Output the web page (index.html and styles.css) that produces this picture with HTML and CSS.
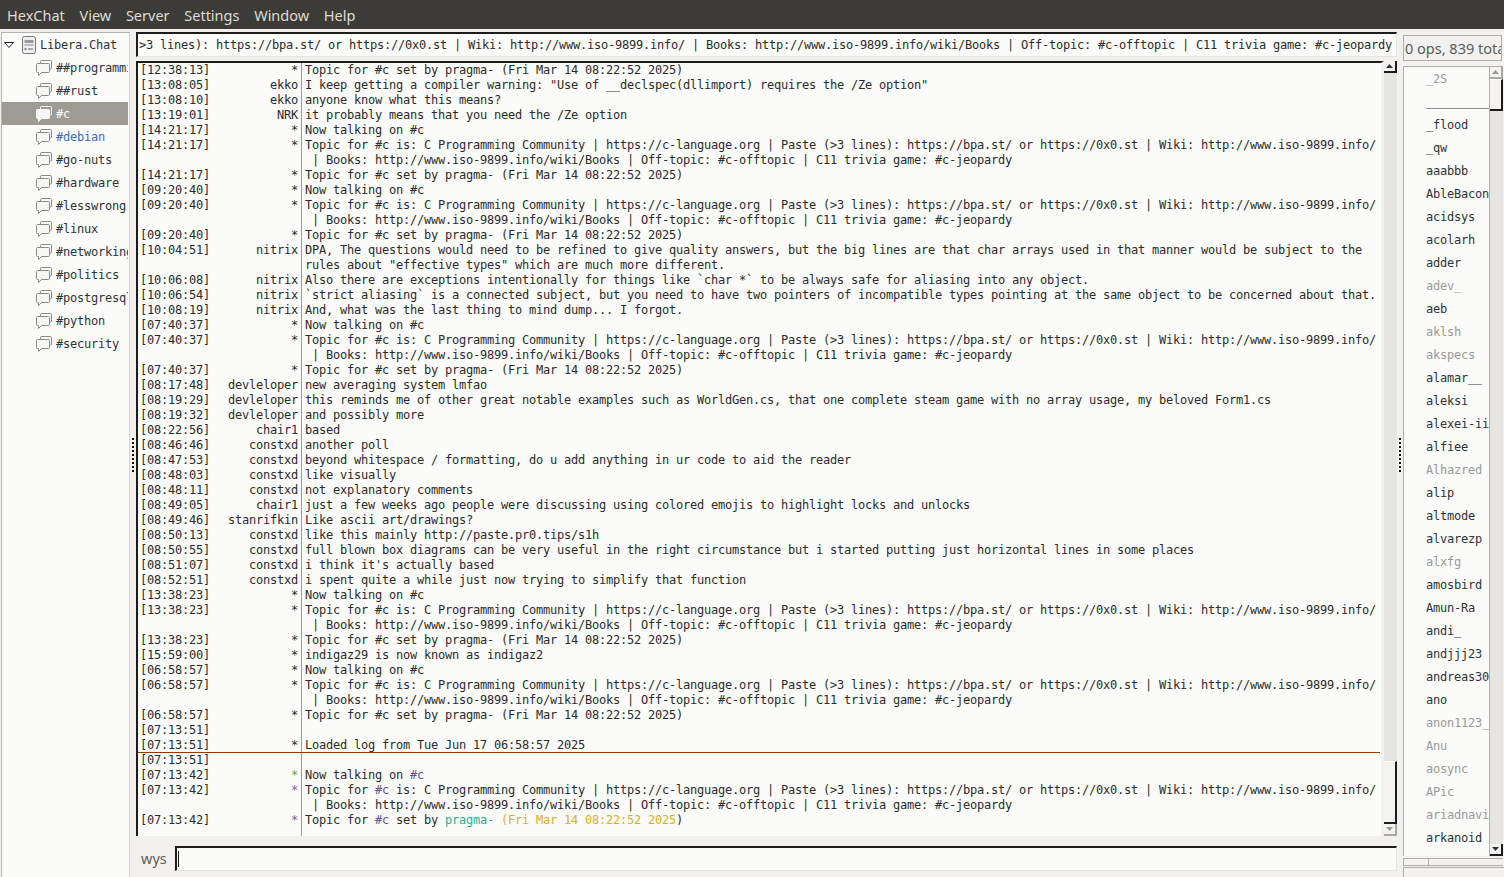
FILE: index.html
```html
<!DOCTYPE html>
<html lang="en">
<head>
<meta charset="utf-8">
<title>HexChat</title>
<link rel="stylesheet" href="styles.css">
</head>
<body>
<svg class="defs" width="0" height="0" aria-hidden="true">
  <symbol id="chan" viewBox="0 0 16 16">
    <path d="M4.500 3.500V1.500a1 1 0 0 1 1-1h9a1 1 0 0 1 1 1v6.500a1 1 0 0 1-1 1h-1" fill="none" stroke="currentColor"/>
    <path d="M1.500 3.500h11a1 1 0 0 1 1 1v7a1 1 0 0 1-1 1H5.500l-3 3v-3h-1a1 1 0 0 1-1-1v-7a1 1 0 0 1 1-1z" fill="#f6f6f4" stroke="currentColor"/>
  </symbol>
</svg>
<header class="menubar">
  <span>HexChat</span><span>View</span><span>Server</span><span>Settings</span><span>Window</span><span>Help</span>
</header>
<main class="workspace">
  <nav class="tree">
    <div class="tree-row server">
      <svg class="arrow" viewBox="0 0 10 6"><path d="M.5.500h9L5 5.500z" fill="#fff" stroke="#222"/></svg>
      <svg class="srv-icon" viewBox="0 0 14 18"><rect x=".5" y=".5" width="13" height="17" rx="2" fill="#eee" stroke="#777"/><rect x="2.500" y="4" width="9" height="3" fill="#999"/><rect x="2.500" y="8" width="9" height="2" fill="#bbb"/><rect x="2.500" y="12" width="2" height="2" fill="#888"/><rect x="6" y="12" width="5" height="2" fill="#aaa"/></svg>
      <span>Libera.Chat</span>
    </div>
    <div class="tree-row"><svg class="chan"><use href="#chan"/></svg><span>##programming</span></div>
    <div class="tree-row"><svg class="chan"><use href="#chan"/></svg><span>##rust</span></div>
    <div class="tree-row active"><svg class="chan"><use href="#chan"/></svg><span>#c</span></div>
    <div class="tree-row blue"><svg class="chan"><use href="#chan"/></svg><span>#debian</span></div>
    <div class="tree-row"><svg class="chan"><use href="#chan"/></svg><span>#go-nuts</span></div>
    <div class="tree-row"><svg class="chan"><use href="#chan"/></svg><span>#hardware</span></div>
    <div class="tree-row"><svg class="chan"><use href="#chan"/></svg><span>#lesswrong</span></div>
    <div class="tree-row"><svg class="chan"><use href="#chan"/></svg><span>#linux</span></div>
    <div class="tree-row"><svg class="chan"><use href="#chan"/></svg><span>#networking</span></div>
    <div class="tree-row"><svg class="chan"><use href="#chan"/></svg><span>#politics</span></div>
    <div class="tree-row"><svg class="chan"><use href="#chan"/></svg><span>#postgresql</span></div>
    <div class="tree-row"><svg class="chan"><use href="#chan"/></svg><span>#python</span></div>
    <div class="tree-row"><svg class="chan"><use href="#chan"/></svg><span>#security</span></div>
  </nav>
  <div class="grip"><i></i></div>
  <section class="center">
    <div class="topic"><span>&gt;3 lines): https://bpa.st/ or https://0x0.st | Wiki: http://www.iso-9899.info/ | Books: http://www.iso-9899.info/wiki/Books | Off-topic: #c-offtopic | C11 trivia game: #c-jeopardy</span></div>
    <div class="chat-wrap">
      <div class="chat">
        <div class="line"><time>[12:38:13]</time><b>*</b><p>Topic for #c set by pragma- (Fri Mar 14 08:22:52 2025)</p></div>
        <div class="line"><time>[13:08:05]</time><b>ekko</b><p>I keep getting a compiler warning: "Use of __declspec(dllimport) requires the /Ze option"</p></div>
        <div class="line"><time>[13:08:10]</time><b>ekko</b><p>anyone know what this means?</p></div>
        <div class="line"><time>[13:19:01]</time><b>NRK</b><p>it probably means that you need the /Ze option</p></div>
        <div class="line"><time>[14:21:17]</time><b>*</b><p>Now talking on #c</p></div>
        <div class="line"><time>[14:21:17]</time><b>*</b><p>Topic for #c is: C Programming Community | https://c-language.org | Paste (&gt;3 lines): https://bpa.st/ or https://0x0.st | Wiki: http://www.iso-9899.info/
 | Books: http://www.iso-9899.info/wiki/Books | Off-topic: #c-offtopic | C11 trivia game: #c-jeopardy</p></div>
        <div class="line"><time>[14:21:17]</time><b>*</b><p>Topic for #c set by pragma- (Fri Mar 14 08:22:52 2025)</p></div>
        <div class="line"><time>[09:20:40]</time><b>*</b><p>Now talking on #c</p></div>
        <div class="line"><time>[09:20:40]</time><b>*</b><p>Topic for #c is: C Programming Community | https://c-language.org | Paste (&gt;3 lines): https://bpa.st/ or https://0x0.st | Wiki: http://www.iso-9899.info/
 | Books: http://www.iso-9899.info/wiki/Books | Off-topic: #c-offtopic | C11 trivia game: #c-jeopardy</p></div>
        <div class="line"><time>[09:20:40]</time><b>*</b><p>Topic for #c set by pragma- (Fri Mar 14 08:22:52 2025)</p></div>
        <div class="line"><time>[10:04:51]</time><b>nitrix</b><p>DPA, The questions would need to be refined to give quality answers, but the big lines are that char arrays used in that manner would be subject to the
rules about "effective types" which are much more different.</p></div>
        <div class="line"><time>[10:06:08]</time><b>nitrix</b><p>Also there are exceptions intentionally for things like `char *` to be always safe for aliasing into any object.</p></div>
        <div class="line"><time>[10:06:54]</time><b>nitrix</b><p>`strict aliasing` is a connected subject, but you need to have two pointers of incompatible types pointing at the same object to be concerned about that.</p></div>
        <div class="line"><time>[10:08:19]</time><b>nitrix</b><p>And, what was the last thing to mind dump... I forgot.</p></div>
        <div class="line"><time>[07:40:37]</time><b>*</b><p>Now talking on #c</p></div>
        <div class="line"><time>[07:40:37]</time><b>*</b><p>Topic for #c is: C Programming Community | https://c-language.org | Paste (&gt;3 lines): https://bpa.st/ or https://0x0.st | Wiki: http://www.iso-9899.info/
 | Books: http://www.iso-9899.info/wiki/Books | Off-topic: #c-offtopic | C11 trivia game: #c-jeopardy</p></div>
        <div class="line"><time>[07:40:37]</time><b>*</b><p>Topic for #c set by pragma- (Fri Mar 14 08:22:52 2025)</p></div>
        <div class="line"><time>[08:17:48]</time><b>devleloper</b><p>new averaging system lmfao</p></div>
        <div class="line"><time>[08:19:29]</time><b>devleloper</b><p>this reminds me of other great notable examples such as WorldGen.cs, that one complete steam game with no array usage, my beloved Form1.cs</p></div>
        <div class="line"><time>[08:19:32]</time><b>devleloper</b><p>and possibly more</p></div>
        <div class="line"><time>[08:22:56]</time><b>chair1</b><p>based</p></div>
        <div class="line"><time>[08:46:46]</time><b>constxd</b><p>another poll</p></div>
        <div class="line"><time>[08:47:53]</time><b>constxd</b><p>beyond whitespace / formatting, do u add anything in ur code to aid the reader</p></div>
        <div class="line"><time>[08:48:03]</time><b>constxd</b><p>like visually</p></div>
        <div class="line"><time>[08:48:11]</time><b>constxd</b><p>not explanatory comments</p></div>
        <div class="line"><time>[08:49:05]</time><b>chair1</b><p>just a few weeks ago people were discussing using colored emojis to highlight locks and unlocks</p></div>
        <div class="line"><time>[08:49:46]</time><b>stanrifkin</b><p>Like ascii art/drawings?</p></div>
        <div class="line"><time>[08:50:13]</time><b>constxd</b><p>like this mainly http://paste.pr0.tips/s1h</p></div>
        <div class="line"><time>[08:50:55]</time><b>constxd</b><p>full blown box diagrams can be very useful in the right circumstance but i started putting just horizontal lines in some places</p></div>
        <div class="line"><time>[08:51:07]</time><b>constxd</b><p>i think it's actually based</p></div>
        <div class="line"><time>[08:52:51]</time><b>constxd</b><p>i spent quite a while just now trying to simplify that function</p></div>
        <div class="line"><time>[13:38:23]</time><b>*</b><p>Now talking on #c</p></div>
        <div class="line"><time>[13:38:23]</time><b>*</b><p>Topic for #c is: C Programming Community | https://c-language.org | Paste (&gt;3 lines): https://bpa.st/ or https://0x0.st | Wiki: http://www.iso-9899.info/
 | Books: http://www.iso-9899.info/wiki/Books | Off-topic: #c-offtopic | C11 trivia game: #c-jeopardy</p></div>
        <div class="line"><time>[13:38:23]</time><b>*</b><p>Topic for #c set by pragma- (Fri Mar 14 08:22:52 2025)</p></div>
        <div class="line"><time>[15:59:00]</time><b>*</b><p>indigaz29 is now known as indigaz2</p></div>
        <div class="line"><time>[06:58:57]</time><b>*</b><p>Now talking on #c</p></div>
        <div class="line"><time>[06:58:57]</time><b>*</b><p>Topic for #c is: C Programming Community | https://c-language.org | Paste (&gt;3 lines): https://bpa.st/ or https://0x0.st | Wiki: http://www.iso-9899.info/
 | Books: http://www.iso-9899.info/wiki/Books | Off-topic: #c-offtopic | C11 trivia game: #c-jeopardy</p></div>
        <div class="line"><time>[06:58:57]</time><b>*</b><p>Topic for #c set by pragma- (Fri Mar 14 08:22:52 2025)</p></div>
        <div class="line"><time>[07:13:51]</time><b></b><p></p></div>
        <div class="line marker"><time>[07:13:51]</time><b>*</b><p>Loaded log from Tue Jun 17 06:58:57 2025</p></div>
        <div class="line"><time>[07:13:51]</time><b></b><p></p></div>
        <div class="line"><time>[07:13:42]</time><b class="green">*</b><p>Now talking on <span class="purple">#c</span></p></div>
        <div class="line"><time>[07:13:42]</time><b class="star">*</b><p>Topic for <span class="purple">#c</span> is: C Programming Community | https://c-language.org | Paste (&gt;3 lines): https://bpa.st/ or https://0x0.st | Wiki: http://www.iso-9899.info/
 | Books: http://www.iso-9899.info/wiki/Books | Off-topic: #c-offtopic | C11 trivia game: #c-jeopardy</p></div>
        <div class="line grow"><time>[07:13:42]</time><b class="star">*</b><p>Topic for <span class="purple">#c</span> set by <span class="teal">pragma-</span> <span class="amber">(Fri Mar 14 08:22:52 2025</span>)</p></div>
      </div>
      <div class="scrollbar chat-scroll">
        <div class="sb-btn"><svg viewBox="0 0 7 4"><path d="M3.500 0L7 4H0z"/></svg></div>
        <div class="sb-track"><div class="sb-thumb"></div></div>
        <div class="sb-btn dim"><svg viewBox="0 0 7 4"><path d="M0 0h7L3.500 4z"/></svg></div>
      </div>
    </div>
    <div class="input-row">
      <span class="nick">wys</span>
      <div class="input"><i class="caret"></i></div>
    </div>
  </section>
  <div class="grip"><i></i></div>
  <aside class="side">
    <div class="count"><span>0 ops, 839 total</span></div>
    <div class="users">
      <div class="names-wrap">
        <ul class="names">
          <li class="away">_2S</li><li>___________</li><li>_flood</li><li>_qw</li><li>aaabbb</li><li>AbleBacon</li><li>acidsys</li><li>acolarh</li><li>adder</li><li class="away">adev_</li><li>aeb</li><li class="away">aklsh</li><li class="away">akspecs</li><li>alamar__</li><li>aleksi</li><li>alexei-ii</li><li>alfiee</li><li class="away">Alhazred</li><li>alip</li><li>altmode</li><li>alvarezp</li><li class="away">alxfg</li><li>amosbird</li><li>Amun-Ra</li><li>andi_</li><li>andjjj23</li><li>andreas303</li><li>ano</li><li class="away">anon1123_</li><li class="away">Anu</li><li class="away">aosync</li><li class="away">APic</li><li class="away">ariadnavi</li><li>arkanoid</li>
        </ul>
        <div class="scrollbar name-scroll">
          <div class="sb-btn dim"><svg viewBox="0 0 7 4"><path d="M3.500 0L7 4H0z"/></svg></div>
          <div class="sb-track"><div class="sb-thumb"></div></div>
          <div class="sb-btn"><svg viewBox="0 0 7 4"><path d="M0 0h7L3.500 4z"/></svg></div>
        </div>
      </div>
      <div class="hscroll"><div class="hthumb"></div></div>
    </div>
    <div class="side-foot"></div>
  </aside>
</main>
</body>
</html>
```
FILE: styles.css
```css
* { box-sizing: border-box; }
html, body { height: 100%; }
body {
  margin: 0;
  height: 877px;
  overflow: hidden;
  background: #f2f1f0;
  color: #2b2b2b;
  font: 12px/15px "DejaVu Sans Mono", monospace;
  letter-spacing: -0.225px;
  display: flex;
  flex-direction: column;
}
.defs { position: absolute; }
.menubar {
  height: 29px;
  flex: none;
  background: #3c3b37;
  color: #dfdbd2;
  font: 14.500px/30px "Noto Sans", sans-serif;
  letter-spacing: 0;
  display: flex;
  gap: 14.700px;
  padding-left: 7px;
  white-space: nowrap;
}
.workspace { flex: 1; min-height: 0; display: flex; padding-top: 3px; }

.tree {
  width: 129px;
  flex: none;
  margin-left: 1px;
  background: #fbfbfa;
  border: 1px solid #b5b4b0;
  border-bottom: 0;
  border-right-color: #d5d4d0;
  overflow: hidden;
}
.tree-row {
  height: 23px;
  display: flex;
  align-items: center;
  padding: 1px 0 0 34px;
  white-space: nowrap;
  color: #2e3436;
  width: 126px;
  overflow: hidden;
  gap: 4px;
}
.tree-row .chan { width: 16px; height: 16px; flex: none; color: #8a8a88; margin-top: -1px; }
.tree-row.server { padding-left: 2px; gap: 0; }
.server span { margin-left: 4px; }
.arrow { width: 10px; height: 6px; flex: none; margin-right: 8px; }
.srv-icon { width: 14px; height: 18px; flex: none; }
.tree-row.active { background: #9d9b94; color: #fff; }
.tree-row.active .chan { color: #fff; }
.tree-row.blue { color: #3a6cc0; }

.grip { width: 6px; flex: none; display: flex; align-items: center; justify-content: center; padding-right: 1px; }
.grip i { width: 2px; height: 34px; background: repeating-linear-gradient(#111 0 2px, transparent 2px 4px); }

.center { width: 1261px; flex: none; display: flex; flex-direction: column; }
.topic {
  height: 25px;
  flex: none;
  background: #fbfbfa;
  border-top: 2px solid #1c1c1c;
  border-left: 2px solid #1c1c1c;
  border-right: 1px solid #e5e4e1;
  border-bottom: 1px solid #e5e4e1;
  padding: 4px 0 0 1px;
  white-space: nowrap;
  overflow: hidden;
}
.chat-wrap { height: 775px; flex: none; margin-top: 4px; display: flex; }
.chat {
  flex: 1;
  min-width: 0;
  background: #fbfbfa;
  border-top: 2px solid #1c1c1c;
  border-left: 2px solid #1c1c1c;
  border-right: 3px solid #f2f1f0;
  display: flex;
  flex-direction: column;
  overflow: hidden;
}
.line {
  display: flex;
  position: relative;
  flex: none;
  min-height: 15px;
}
.line time { position: absolute; left: 2px; top: 0; }
.line b {
  font-weight: 400;
  text-align: right;
  padding-right: 3px;
  border-right: 1px solid #9a9a9a;
  width: 164px;
  flex: none;
  white-space: nowrap;
}
.line p { margin: 0 0 0 3px; white-space: pre; }
.line.marker { border-bottom: 1px solid #8f3a00; height: 15px; width: 1242px; z-index: 1; }
.line.grow { flex: 1; }
.green { color: #6ea82a; }
.star { color: #8a5a9a; }
.purple { color: #6b4a86; }
.teal { color: #2eae90; }
.amber { color: #d9b020; }

.scrollbar { width: 13px; flex: none; display: flex; flex-direction: column; background: #e6e5e2; }
.sb-btn {
  height: 12px;
  flex: none;
  background: #f4f3f1;
  border-right: 2px solid #1c1c1c;
  border-bottom: 2px solid #1c1c1c;
  display: flex;
  align-items: center;
  justify-content: center;
}
.sb-btn svg { width: 7px; height: 4px; fill: #2e3436; }
.sb-btn.dim { border-color: #a9a8a4; }
.sb-btn.dim svg { fill: #9a9a9a; }
.sb-track { flex: 1; display: flex; flex-direction: column; }
.sb-thumb { background: #f4f3f1; border-right: 2px solid #1c1c1c; border-bottom: 2px solid #1c1c1c; border-top: 1px solid #fff; }
.chat-scroll .sb-track { justify-content: flex-end; }
.chat-scroll .sb-thumb { height: 63px; }
.name-scroll .sb-thumb { height: 32px; }

.input-row { flex: 1; display: flex; align-items: flex-start; padding-top: 10px; margin-left: -5px; }
.nick { width: 44px; flex: none; font: 14.500px/25px "Noto Sans", sans-serif; letter-spacing: 0; color: #5e5c58; padding-left: 10px; }
.input {
  flex: 1;
  height: 25px;
  background: #fbfbfa;
  border-top: 2px solid #1c1c1c;
  border-left: 2px solid #1c1c1c;
  border-right: 1px solid #e5e4e1;
  border-bottom: 1px solid #e5e4e1;
  padding: 3px 0 0 1px;
}
.caret { display: block; width: 1px; height: 16px; background: #111; }

.side { width: 101px; flex: none; display: flex; flex-direction: column; min-width: 0; padding-top: 3px; }
.count {
  height: 26px;
  flex: none;
  width: 99px;
  margin-bottom: 5px;
  background: #f2f1f0;
  border: 1px solid #b0afab;
  font: 14.500px/24px "Noto Sans", sans-serif;
  letter-spacing: 0;
  color: #5e5c58;
  padding-left: 1px;
  white-space: nowrap;
  overflow: hidden;
}
.users { flex: none; display: flex; flex-direction: column; margin-right: 1px; }
.names-wrap { height: 790px; display: flex; flex: none; border-top: 1px solid #b0afab; border-left: 1px solid #b0afab; }
.names {
  list-style: none;
  margin: 0;
  padding: 1px 0 0 22px;
  flex: 1;
  min-width: 0;
  background: #fbfbfa;
  overflow: hidden;
  border-right: 1px solid #b0afab;
}
.names li { height: 23px; line-height: 23px; white-space: nowrap; color: #2e3436; }
.names li.away { color: #9a9a9a; }
.hscroll { height: 8px; margin-top: 2px; border-top: 1px solid #b0afab; border-bottom: 1px solid #b0afab; flex: none; background: #f2f1f0; }
.hthumb { width: 26px; height: 100%; background: #f4f3f1; border: 1px solid #b0afab; border-width: 0 1px; }
.side-foot { flex: 1; margin-top: 1px; border-top: 1px solid #b0afab; border-left: 1px solid #b0afab; }
```
